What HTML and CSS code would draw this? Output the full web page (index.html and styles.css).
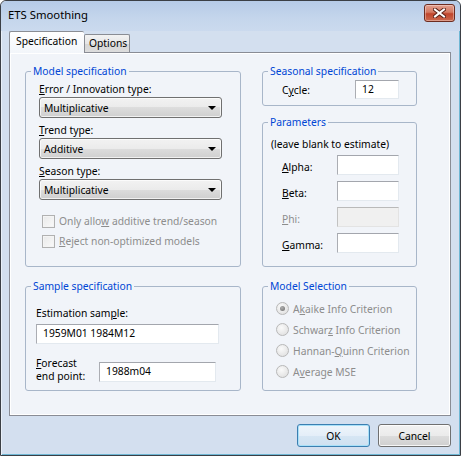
FILE: index.html
```html
<!DOCTYPE html>
<html>
<head>
<meta charset="utf-8">
<link rel="stylesheet" href="styles.css">
</head>
<body>
<div class="window">
  <div class="titlebar">
    <span class="title">ETS Smoothing</span>
    <div class="close">
      <svg width="13" height="10" viewBox="0 0 13 10">
        <path d="M2 1.5 L11 8.5 M11 1.5 L2 8.5" stroke="#5a2218" stroke-width="4" stroke-linecap="square" fill="none"/>
        <path d="M2 1.5 L11 8.5 M11 1.5 L2 8.5" stroke="#ffffff" stroke-width="2" stroke-linecap="square" fill="none"/>
      </svg>
    </div>
  </div>
  <div class="client">
    <div class="tabs">
      <div class="tab active">Specification</div>
      <div class="tab">Options</div>
    </div>
    <div class="panel">
      <div class="grid">
        <fieldset class="group g-model">
          <legend>Model specification</legend>
          <div class="model-body">
            <div class="lbl l1"><u>E</u>rror / Innovation type:</div>
            <div class="combo"><span>Multiplicative</span><i class="arrow"></i></div>
            <div class="lbl"><u>T</u>rend type:</div>
            <div class="combo"><span>Additive</span><i class="arrow"></i></div>
            <div class="lbl"><u>S</u>eason type:</div>
            <div class="combo"><span>Multiplicative</span><i class="arrow"></i></div>
            <div class="check c1"><i class="box"></i><span>Only allo<u>w</u> additive trend/season</span></div>
            <div class="check c2"><i class="box"></i><span><u>R</u>eject non-optimized models</span></div>
          </div>
        </fieldset>
        <div class="rightcol">
          <fieldset class="group g-seasonal">
            <legend>Seasonal specification</legend>
            <div class="seasonal-body">
              <span class="cyc-lbl">C<u>y</u>cle:</span>
              <div class="edit cyc">12</div>
            </div>
          </fieldset>
          <fieldset class="group g-params">
            <legend>Parameters</legend>
            <div class="params-body">
              <div class="note">(leave blank to estimate)</div>
              <div class="prow"><span class="plbl"><u>A</u>lpha:</span><div class="edit pin"></div></div>
              <div class="prow"><span class="plbl"><u>B</u>eta:</span><div class="edit pin"></div></div>
              <div class="prow"><span class="plbl dis"><u>P</u>hi:</span><div class="edit pin disabled"></div></div>
              <div class="prow"><span class="plbl"><u>G</u>amma:</span><div class="edit pin"></div></div>
            </div>
          </fieldset>
        </div>
        <fieldset class="group g-sample">
          <legend>Sample specification</legend>
          <div class="sample-body">
            <div class="lbl">Estimation sam<u>p</u>le:</div>
            <div class="edit est">1959M01 1984M12</div>
            <div class="frow">
              <div class="flbl"><u>F</u>orecast<br>end point:</div>
              <div class="edit fin">1988m04</div>
            </div>
          </div>
        </fieldset>
        <fieldset class="group g-select">
          <legend>Model Selection</legend>
          <div class="select-body">
            <div class="radio"><i class="dot on"></i><span>A<u>k</u>aike Info Criterion</span></div>
            <div class="radio"><i class="dot"></i><span>Schwar<u>z</u> Info Criterion</span></div>
            <div class="radio"><i class="dot"></i><span>Hannan-<u>Q</u>uinn Criterion</span></div>
            <div class="radio"><i class="dot"></i><span>A<u>v</u>erage MSE</span></div>
          </div>
        </fieldset>
      </div>
    </div>
    <div class="buttons">
      <div class="btn default">OK</div>
      <div class="btn">Cancel</div>
    </div>
  </div>
</div>
</body>
</html>
```

FILE: styles.css
```css
* { box-sizing: border-box; }
html, body { margin: 0; padding: 0; }
body {
  width: 461px;
  height: 456px;
  font-family: "Noto Sans", "Open Sans", sans-serif;
  font-size: 10.3px;
  color: #000;
  background: #fff;
}
u { text-decoration: underline; text-underline-offset: 1px; }

.window {
  width: 461px;
  height: 456px;
  border: 1px solid #3b3f45;
  border-radius: 6px 6px 0 0;
  background: #d3dfef;
  box-shadow: inset 1px 1px 0 #e9f0f9, inset -1px -1px 0 #6fb7d4;
  display: flex;
  flex-direction: column;
  overflow: hidden;
}

.titlebar {
  height: 30px;
  flex: none;
  display: flex;
  align-items: flex-start;
  justify-content: space-between;
  background: linear-gradient(#b6cbe7, #c5d6ec 60%, #cbdaee);
  border-radius: 5px 5px 0 0;
}
.title {
  font-size: 11.3px;
  line-height: 16px;
  margin: 6px 0 0 7px;
  color: #000;
}
.close {
  width: 31px;
  height: 18px;
  margin: 3px 5px 0 0;
  border: 1px solid #6d2c20;
  border-radius: 3px;
  background: linear-gradient(#e3a08f, #d47a63 45%, #c0452c 55%, #cc6a4f);
  box-shadow: inset 0 0 0 1px rgba(255,255,255,0.35);
  display: flex;
  align-items: center;
  justify-content: center;
}

.client {
  flex: 1;
  display: flex;
  flex-direction: column;
  padding: 0 9px 0 8px;
}

.tabs {
  height: 21px;
  display: flex;
  align-items: flex-end;
  position: relative;
  z-index: 1;
}
.tab {
  height: 18px;
  border: 1px solid #8a8d94;
  border-bottom: none;
  border-radius: 2px 2px 0 0;
  background: linear-gradient(#f3f3f3, #e6e6e6 50%, #d6d6d6 50%, #dddddd);
  padding: 0 4px 0 4px;
  line-height: 16px;
  width: 46px;
}
.tab.active {
  height: 22px;
  margin-bottom: -1px;
  background: linear-gradient(#ffffff, #f2f5fa);
  padding: 0 6px 0 6px;
  line-height: 19px;
  border-right: none;
  width: 75px;
}

.panel {
  height: 364px;
  border: 1px solid #898c95;
  background: #f1f4f9;
  box-shadow: inset 1px 1px 0 #fff, inset -1px -1px 0 #fff;
  padding: 11px 0 0 15px;
}

.grid {
  display: grid;
  grid-template-columns: 216px 155px;
  grid-template-rows: 203px 112px;
  column-gap: 21px;
  row-gap: 12px;
}

.group {
  margin: 0;
  padding: 0;
  min-width: 0;
  border: 1px solid #a8b6c9;
  border-radius: 3px;
}
.group legend {
  margin-left: 5px;
  padding: 0 2px;
  color: #0046d5;
  line-height: 14px;
}

.rightcol {
  display: flex;
  flex-direction: column;
  gap: 9px;
}
.g-seasonal { height: 42px; }
.g-params { height: 152px; }

.lbl { line-height: 14px; margin-top: 5px; }
.model-body { padding: 0 0 0 13px; display: flex; flex-direction: column; align-items: flex-start; }
.model-body .l1 { margin-top: 4px; }

.combo {
  width: 183px;
  height: 21px;
  margin-top: 1px;
  border: 1px solid #707070;
  border-radius: 3px;
  background: linear-gradient(#f2f2f2, #ebebeb 50%, #dddddd 50%, #cfcfcf);
  box-shadow: inset 0 0 0 1px rgba(255,255,255,0.7);
  display: flex;
  align-items: center;
  justify-content: space-between;
  padding: 0 5px 0 4px;
  line-height: 14px;
}
.arrow {
  width: 0;
  height: 0;
  border-left: 4px solid transparent;
  border-right: 4px solid transparent;
  border-top: 4px solid #000;
  margin-top: 1px;
}

.check {
  display: flex;
  align-items: center;
  height: 14px;
  color: #8d8d8d;
  margin-left: 3px;
}
.check.c1 { margin-top: 14px; }
.check.c2 { margin-top: 6px; }
.box {
  width: 13px;
  height: 13px;
  border: 1px solid #b1b1b1;
  background: linear-gradient(135deg, #e9e9e9, #fafafa);
  box-shadow: inset 0 0 0 1px #f4f4f4;
  margin-right: 4px;
  flex: none;
}

.edit {
  height: 19px;
  background: #fff;
  border: 1px solid;
  border-color: #a3a6ad #e3e9ef #e3e9ef #abadb3;
  line-height: 16px;
  padding-left: 6px;
}
.edit.disabled { background: #f0f0f0; border-color: #b9b9b9 #e3e3e3 #e3e3e3 #c2c2c2; }

.seasonal-body {
  display: flex;
  align-items: center;
  padding: 2px 0 0 19px;
}
.cyc-lbl { width: 73px; line-height: 14px; margin-top: 1px; }
.cyc { width: 44px; }

.params-body { padding: 8px 0 0 8px; }
.note { line-height: 14px; }
.prow {
  display: flex;
  align-items: center;
  margin-top: 6px;
  padding-left: 11px;
}
.note + .prow { margin-top: 4px; }
.plbl { width: 55px; line-height: 14px; padding-top: 3px; }
.plbl.dis { color: #8d8d8d; }
.pin { width: 62px; height: 20px; }

.sample-body { padding: 8px 0 0 10px; }
.est { width: 183px; height: 20px; margin-top: 4px; }
.frow {
  display: flex;
  align-items: center;
  margin-top: 13px;
}
.flbl { width: 63px; line-height: 13px; }
.fin { width: 117px; height: 20px; margin-top: 4px; }

.select-body { padding: 5px 0 0 13px; }
.radio {
  height: 21px;
  display: flex;
  align-items: center;
  color: #8d8d8d;
  white-space: nowrap;
}
.dot {
  width: 13px;
  height: 13px;
  border-radius: 50%;
  border: 1px solid #b8b8b8;
  background: radial-gradient(circle at 40% 35%, #fafafa, #dcdcdc);
  margin-right: 4px;
  flex: none;
  display: flex;
  align-items: center;
  justify-content: center;
}
.dot.on::after {
  content: "";
  width: 5px;
  height: 5px;
  border-radius: 50%;
  background: radial-gradient(circle at 40% 35%, #b0b0b0, #6c6c6c);
}

.buttons {
  display: flex;
  justify-content: flex-end;
  gap: 8px;
  margin-top: 8px;
}
.btn {
  width: 73px;
  height: 23px;
  border: 1px solid #707070;
  border-radius: 3px;
  background: linear-gradient(#f2f2f2, #ebebeb 50%, #dddddd 50%, #cfcfcf);
  box-shadow: inset 0 0 0 1px rgba(255,255,255,0.8);
  display: flex;
  align-items: center;
  justify-content: center;
  line-height: 14px;
}
.btn.default {
  border-color: #3c7fb1;
  background: linear-gradient(#eef5fb, #e4eef8 50%, #d6e6f4 50%, #cfe0f0);
  box-shadow: inset 0 0 0 1px #a8e0f8;
}
```
